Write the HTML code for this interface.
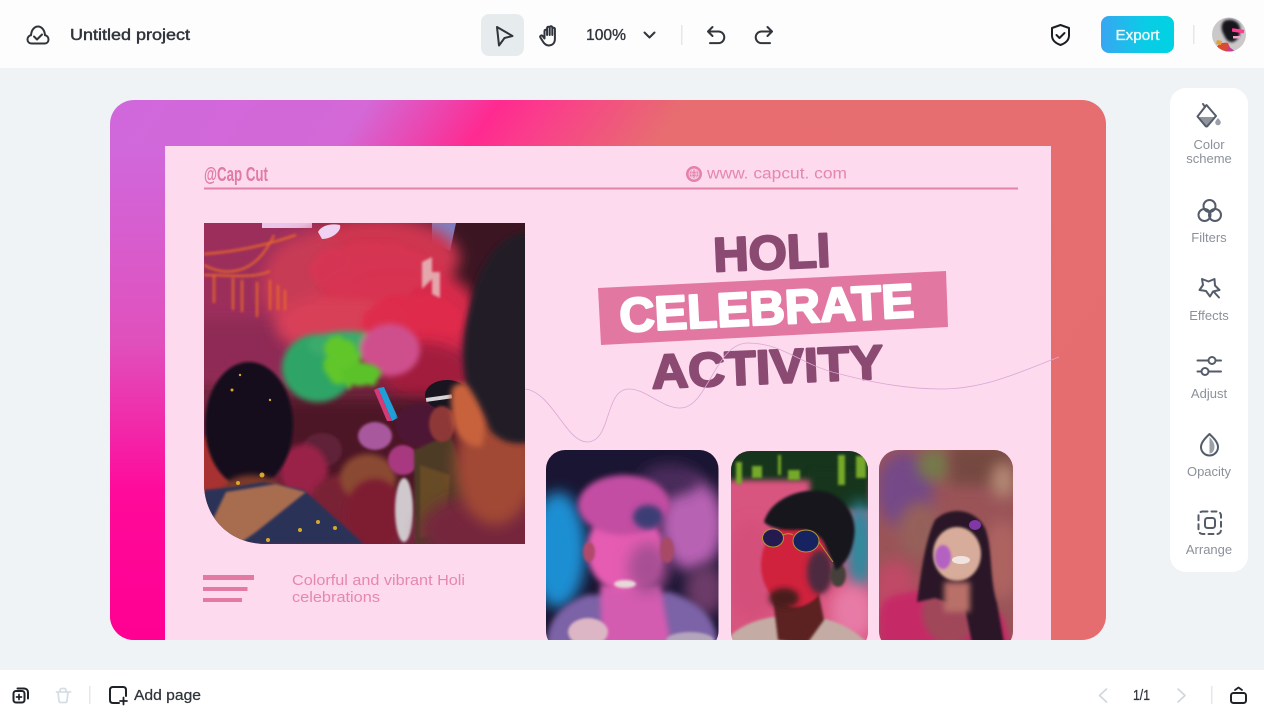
<!DOCTYPE html>
<html lang="en">
<head>
<meta charset="utf-8">
<title>Untitled project</title>
<style>
html,body{margin:0;padding:0;width:1264px;height:712px;overflow:hidden;background:#eff3f6}
svg{display:block}
text{font-family:"Liberation Sans",sans-serif}
.ui{stroke:#30353b;stroke-width:2;fill:none;stroke-linecap:round;stroke-linejoin:round}
.side{stroke:#555c69;stroke-width:2;fill:none;stroke-linecap:round;stroke-linejoin:round}
.lbl{font-size:13px;fill:#8b919a;text-anchor:middle}
</style>
</head>
<body>
<svg width="1264" height="712" viewBox="0 0 1264 712" xmlns="http://www.w3.org/2000/svg">
<defs>
<linearGradient id="bg" gradientUnits="userSpaceOnUse" x1="147" y1="47" x2="1069" y2="693">
<stop offset="0" stop-color="#d068dc"/><stop offset=".19" stop-color="#d368d6"/><stop offset=".285" stop-color="#ff2a90"/><stop offset=".32" stop-color="#fb3c8c"/><stop offset=".42" stop-color="#e76d70"/><stop offset="1" stop-color="#e56d6f"/>
</linearGradient>
<linearGradient id="bg2" x1="0" y1="0" x2="0" y2="1">
<stop offset="0" stop-color="#d068dc"/><stop offset=".4" stop-color="#e050bc"/><stop offset=".7" stop-color="#ff0a9a"/><stop offset="1" stop-color="#ff0092"/>
</linearGradient>
<linearGradient id="exp" x1="0" y1="0" x2="1" y2="0"><stop offset="0" stop-color="#38a6f2"/><stop offset=".6" stop-color="#0accE6"/><stop offset="1" stop-color="#00d2e2"/></linearGradient>
<filter id="b1" x="-30%" y="-30%" width="160%" height="160%"><feGaussianBlur stdDeviation="1.200"/></filter>
<filter id="b3" x="-40%" y="-40%" width="180%" height="180%"><feGaussianBlur stdDeviation="3"/></filter>
<filter id="b7" x="-50%" y="-50%" width="200%" height="200%"><feGaussianBlur stdDeviation="7"/></filter>
<filter id="cl" x="-30%" y="-30%" width="160%" height="160%"><feTurbulence type="fractalNoise" baseFrequency=".06" numOctaves="3" seed="4"/><feDisplacementMap in="SourceGraphic" scale="14"/><feGaussianBlur stdDeviation="2.500"/></filter>
<clipPath id="canvas"><rect x="110" y="100" width="996" height="540" rx="24"/></clipPath>
<clipPath id="p1"><path d="M204 223H525V544H266C230 544 204 518 204 483Z"/></clipPath>
<clipPath id="p2"><rect x="546" y="450" width="172.500" height="200" rx="19"/></clipPath>
<clipPath id="p3"><rect x="731" y="451" width="137" height="200" rx="19"/></clipPath>
<clipPath id="p4"><rect x="879" y="450" width="134" height="200" rx="19"/></clipPath>
<clipPath id="av"><circle cx="1229" cy="34.500" r="17"/></clipPath>
</defs>

<rect width="1264" height="712" fill="#eff3f6"/>
<rect width="1264" height="68" fill="#fdfdfe"/>
<rect y="670" width="1264" height="42" fill="#ffffff"/>

<!-- Canvas -->
<g clip-path="url(#canvas)">
<rect x="110" y="100" width="996" height="540" fill="url(#bg)"/>
<rect x="110" y="146" width="56" height="494" fill="url(#bg2)"/>
<rect x="165" y="146" width="886" height="500" fill="#fddaee"/>

<text x="204" y="181" font-size="20" font-weight="700" fill="#e07ba3" textLength="64" lengthAdjust="spacingAndGlyphs">@Cap Cut</text>
<circle cx="694" cy="174" r="8" fill="#e382aa"/>
<g fill="none" stroke="#fbd4e8" stroke-width=".8"><circle cx="694" cy="174" r="5"/><ellipse cx="694" cy="174" rx="2.200" ry="5"/><path d="M689 174h10M690 171h8M690 177h8"/></g>
<text x="707" y="178.500" font-size="15.500" fill="#e587ad" textLength="140" lengthAdjust="spacingAndGlyphs">www. capcut. com</text>
<rect x="204" y="187.500" width="814" height="2" fill="#e283a8"/>

<!-- Main photo -->
<g clip-path="url(#p1)">
<rect x="204" y="223" width="321" height="321" fill="#742640"/>
<rect x="190" y="210" width="130" height="170" fill="#9c2e5c" filter="url(#b7)"/>
<rect x="190" y="320" width="100" height="60" fill="#8e2c54" filter="url(#b7)"/>
<rect x="262" y="223" width="50" height="5" fill="#eac6e8"/>
<rect x="440" y="215" width="95" height="95" fill="#3a1620" filter="url(#b3)"/>
<path d="M432 223h24l-6 28-18-8z" fill="#7f80c0"/>
<g filter="url(#b7)">
<ellipse cx="375" cy="258" rx="85" ry="40" fill="#cf3450"/>
<ellipse cx="310" cy="285" rx="48" ry="50" fill="#c83a55"/>
<ellipse cx="395" cy="310" rx="82" ry="46" fill="#d82c4c"/>
<ellipse cx="345" cy="325" rx="70" ry="30" fill="#d84058"/>
<ellipse cx="435" cy="335" rx="32" ry="30" fill="#dc2a4c"/>
</g>
<g filter="url(#cl)" opacity=".85">
<ellipse cx="370" cy="270" rx="60" ry="28" fill="#d83452"/>
<ellipse cx="410" cy="320" rx="50" ry="26" fill="#e02c4c"/>
</g>
<path d="M318 232c3-6 12-9 22-7 2 6-8 14-18 14z" fill="#f0d2f2"/>
<path d="M422 262l10-5v22l-10 10zM432 272h8v26l-8-4z" fill="#e8d0cc" opacity=".75" filter="url(#b1)"/>
<g fill="none" stroke="#e8682a" stroke-width="2" filter="url(#b1)">
<path d="M204 254c30-2 60-8 92-19"/><path d="M204 265c18 10 50 14 70-30"/><path d="M204 275c25 0 50 4 66-4"/>
<path d="M214 275v28M233 278v32M242 280v32M257 282v35M270 280v30M278 285v25M285 290v20"/>
</g>
<ellipse cx="425" cy="372" rx="45" ry="30" fill="#a21e3c" filter="url(#b7)"/>
<rect x="280" y="398" width="185" height="100" fill="#4e1628" filter="url(#b7)"/>
<g filter="url(#b3)">
<ellipse cx="318" cy="368" rx="36" ry="34" fill="#2ea566"/>
<ellipse cx="348" cy="345" rx="40" ry="14" fill="#3aab6c"/>
<ellipse cx="390" cy="350" rx="30" ry="26" fill="#cf4f8d"/>
</g>
<g filter="url(#cl)">
<ellipse cx="342" cy="362" rx="17" ry="25" fill="#60c62c"/>
<ellipse cx="362" cy="374" rx="19" ry="12" fill="#5cc22c"/>
</g>
<path d="M378 388l6-1 14 31-6 3z" fill="#1f9ed8"/><path d="M378 388l-4 2 13 31 5 0z" fill="#d43a78"/>
<ellipse cx="375" cy="436" rx="17" ry="14" fill="#a8589c" filter="url(#b1)"/>
<ellipse cx="322" cy="450" rx="20" ry="17" fill="#5e2438" filter="url(#b1)"/>
<ellipse cx="304" cy="472" rx="24" ry="28" fill="#9a2048" filter="url(#b3)"/>
<ellipse cx="345" cy="500" rx="34" ry="26" fill="#7a2434" filter="url(#b3)"/>
<ellipse cx="368" cy="478" rx="28" ry="24" fill="#8a4a30" filter="url(#b3)"/>
<ellipse cx="375" cy="515" rx="30" ry="36" fill="#7e1c30" filter="url(#b3)"/>
<ellipse cx="404" cy="510" rx="9" ry="32" fill="#cfc8cc" filter="url(#b1)"/>
<ellipse cx="403" cy="460" rx="15" ry="15" fill="#a83880" filter="url(#b1)"/>
<ellipse cx="420" cy="425" rx="24" ry="22" fill="#4e1634" filter="url(#b1)"/>
<path d="M414 450l36-16 25 70-15 40h-45z" fill="#4e3a26" filter="url(#b1)"/>
<path d="M420 465l30 10-4 55-26 8z" fill="#6e5028" opacity=".8" filter="url(#b1)"/>
<ellipse cx="447" cy="395" rx="22" ry="15" fill="#181420"/>
<rect x="426" y="396" width="26" height="4" fill="#d8d4d8" transform="rotate(-8 440 398)"/>
<ellipse cx="442" cy="424" rx="13" ry="18" fill="#8e3838" filter="url(#b1)"/>
<ellipse cx="212" cy="470" rx="18" ry="36" fill="#a83030" filter="url(#b1)"/>
<ellipse cx="495" cy="530" rx="75" ry="38" fill="#74283c" filter="url(#b7)"/>
<ellipse cx="495" cy="465" rx="40" ry="60" fill="#a24836" filter="url(#b7)"/>
<path d="M452 388c8-8 22-8 28 6 6 16 6 36 2 52-10 2-22-4-28-20-3-12-4-28-2-38z" fill="#c8623e" filter="url(#b3)"/>
<path d="M530 232C505 232 484 256 474 290 465 320 460 350 466 382 474 396 484 410 490 430 500 442 515 446 530 442Z" fill="#241a28" filter="url(#b3)"/>
<ellipse cx="249" cy="425" rx="44" ry="63" fill="#14101a" filter="url(#b1)"/>
<ellipse cx="252" cy="495" rx="32" ry="20" fill="#7c3a2a" filter="url(#b3)"/>
<path d="M204 490l30-3 30-5 40 8 60 54H204z" fill="#2c3358" filter="url(#b1)"/>
<path d="M226 492l50-8 30 8-50 40-20 14-30-12z" fill="#a86c50" filter="url(#b1)"/>
<g fill="#d8a828"><circle cx="232" cy="390" r="1.500"/><circle cx="240" cy="375" r="1.200"/><circle cx="270" cy="400" r="1.200"/><circle cx="300" cy="530" r="2"/><circle cx="318" cy="522" r="2"/><circle cx="335" cy="528" r="2"/><circle cx="262" cy="475" r="2.500"/><circle cx="238" cy="483" r="2"/><circle cx="268" cy="540" r="2"/></g>
</g>

<!-- Small text -->
<rect x="203" y="575" width="51" height="5" fill="#e37aa4"/>
<rect x="203" y="587" width="44.500" height="4" fill="#e37aa4"/>
<rect x="203" y="598" width="39" height="4" fill="#e37aa4"/>
<text x="292" y="585" font-size="15" fill="#e588ae" textLength="173" lengthAdjust="spacingAndGlyphs">Colorful and vibrant Holi</text>
<text x="292" y="602" font-size="15" fill="#e588ae" textLength="88" lengthAdjust="spacingAndGlyphs">celebrations</text>

<!-- Title -->
<polygon points="598,288 946,271 948,327 601,345" fill="#e278a2"/>
<g font-weight="700" font-size="48" text-anchor="middle" stroke-linejoin="round">
<text transform="translate(772.500 269) rotate(-2.500)" fill="#8a4a72" stroke="#8a4a72" stroke-width="2.200" textLength="117" lengthAdjust="spacingAndGlyphs">HOLI</text>
<text transform="translate(767.500 324.500) rotate(-2.900)" fill="#ffffff" stroke="#ffffff" stroke-width="2.200" textLength="295" lengthAdjust="spacingAndGlyphs">CELEBRATE</text>
<text transform="translate(768 383.500) rotate(-2.500)" fill="#8a4a72" stroke="#8a4a72" stroke-width="2.200" textLength="232" lengthAdjust="spacingAndGlyphs">ACTIVITY</text>
</g>
<path d="M525 389C552 392 566 442 587 442C612 442 604 389 629 389C646 389 662 408 680 408C708 408 715 343 748 343C782 343 800 364 836 373C870 382 905 389 941 389C985 389 1020 372 1059 357" fill="none" stroke="#d9a8d4" stroke-width=".8"/>

<!-- Photo A -->
<g clip-path="url(#p2)">
<rect x="546" y="450" width="173" height="200" fill="#1a1532"/>
<ellipse cx="558" cy="550" rx="28" ry="58" fill="#1b8ed2" filter="url(#b7)"/>
<ellipse cx="692" cy="525" rx="32" ry="46" fill="#b862b4" filter="url(#b7)"/>
<ellipse cx="705" cy="590" rx="20" ry="26" fill="#6c3a68" filter="url(#b7)"/>
<ellipse cx="670" cy="480" rx="30" ry="16" fill="#4a2a5a" filter="url(#b7)"/>
<path d="M546 650c0-28 12-44 40-55l84-3c30 10 48 26 48 58z" fill="#7b62a6" filter="url(#b3)"/>
<path d="M600 585h60l12 65h-70z" fill="#d45cb0" filter="url(#b3)"/>
<ellipse cx="625" cy="550" rx="38" ry="42" fill="#e55cb2" filter="url(#b3)"/>
<ellipse cx="648" cy="568" rx="20" ry="26" fill="#a85094" filter="url(#b7)"/>
<ellipse cx="589" cy="552" rx="6" ry="10" fill="#b0486a" filter="url(#b1)"/>
<ellipse cx="667" cy="550" rx="7" ry="13" fill="#a84a68" filter="url(#b1)"/>
<ellipse cx="624" cy="505" rx="46" ry="30" fill="#c24ea2" filter="url(#b3)"/>
<ellipse cx="648" cy="517" rx="15" ry="12" fill="#3e3c74" filter="url(#b3)"/>
<ellipse cx="625" cy="584" rx="11" ry="4" fill="#e8d8d8" filter="url(#b1)"/>
<ellipse cx="588" cy="632" rx="20" ry="14" fill="#dcb6c4" filter="url(#b1)"/>
<ellipse cx="690" cy="640" rx="24" ry="8" fill="#b4a4bc" filter="url(#b1)"/>
</g>

<!-- Photo B -->
<g clip-path="url(#p3)">
<rect x="731" y="451" width="137" height="200" fill="#d8557f"/>
<rect x="720" y="440" width="160" height="40" fill="#14351e" filter="url(#b3)"/>
<rect x="810" y="470" width="60" height="40" fill="#14351e" filter="url(#b3)"/>
<g fill="#76a82c" filter="url(#b1)"><rect x="736" y="462" width="6" height="22"/><rect x="752" y="466" width="10" height="12"/><rect x="788" y="470" width="12" height="10"/><rect x="838" y="455" width="7" height="30"/><rect x="856" y="456" width="10" height="22"/><rect x="778" y="455" width="3" height="20"/></g>
<ellipse cx="860" cy="545" rx="14" ry="45" fill="#2f8a9e" filter="url(#b7)"/>
<ellipse cx="852" cy="612" rx="22" ry="28" fill="#e77aa6" filter="url(#b7)"/>
<ellipse cx="752" cy="570" rx="24" ry="50" fill="#d4507a" filter="url(#b7)"/>
<path d="M731 650v-15c14-12 30-16 42-18l52 2c18 4 32 14 43 24v7z" fill="#c4aca4" filter="url(#b1)"/>
<path d="M772 590h46l6 30-18 25-28-5z" fill="#5c2020" filter="url(#b1)"/>
<ellipse cx="795" cy="565" rx="34" ry="42" fill="#d0203e" filter="url(#b1)"/>
<ellipse cx="820" cy="572" rx="13" ry="22" fill="#4e2a40" filter="url(#b3)"/>
<ellipse cx="784" cy="598" rx="15" ry="10" fill="#4a1a1e" filter="url(#b3)"/>
<ellipse cx="838" cy="575" rx="8" ry="12" fill="#45403a" filter="url(#b1)"/>
<path d="M764 522c6-22 36-36 62-30 16 4 32 22 28 46-2 14-8 26-18 32l-10-22c-4-14-18-20-32-18-14 0-24-2-30-8z" fill="#12181c" filter="url(#b1)"/>
<ellipse cx="773" cy="538" rx="10.500" ry="9" fill="#241a50" stroke="#b09838" stroke-width="1"/>
<ellipse cx="806" cy="541" rx="13" ry="11" fill="#172260" stroke="#b09838" stroke-width="1"/>
<path d="M783 535c4-2 7-2 10 0M819 542l14 20" fill="none" stroke="#b09838" stroke-width="1"/>
</g>

<!-- Photo C -->
<g clip-path="url(#p4)">
<rect x="879" y="450" width="134" height="200" fill="#9a5458"/>
<ellipse cx="905" cy="490" rx="28" ry="38" fill="#744a88" filter="url(#b7)"/>
<ellipse cx="935" cy="465" rx="18" ry="16" fill="#747a4c" filter="url(#b7)"/>
<rect x="950" y="445" width="63" height="40" fill="#74483f" filter="url(#b7)"/>
<ellipse cx="1003" cy="480" rx="12" ry="18" fill="#b48874" filter="url(#b7)"/>
<ellipse cx="920" cy="530" rx="22" ry="28" fill="#96605a" filter="url(#b7)"/>
<ellipse cx="1002" cy="560" rx="18" ry="40" fill="#ad6460" filter="url(#b7)"/>
<ellipse cx="895" cy="590" rx="22" ry="30" fill="#bf4866" filter="url(#b7)"/>
<path d="M879 650v-35c2-16 12-20 26-22l30-5 34 8 34 20 10 34z" fill="#c62a66" filter="url(#b3)"/>
<ellipse cx="950" cy="612" rx="28" ry="32" fill="#a0465a" filter="url(#b3)"/>
<path d="M915 640h75v10h-75z" fill="#8a1f50"/>
<path d="M935 520c14-14 40-12 50 8 8 20 4 50 12 75l8 45h-32l-8-40-30-10-18 4c4-28 8-62 18-82z" fill="#2a1428" filter="url(#b1)"/>
<ellipse cx="957" cy="554" rx="24" ry="27" fill="#d8ac9a" filter="url(#b1)"/>
<ellipse cx="943" cy="557" rx="8" ry="12" fill="#b462c2" filter="url(#b1)"/>
<ellipse cx="975" cy="525" rx="6" ry="5" fill="#8038a8"/>
<ellipse cx="961" cy="560" rx="9" ry="4" fill="#f0e4e0"/>
<rect x="944" y="582" width="26" height="30" fill="#b87068" filter="url(#b3)"/>
</g>
</g>

<!-- Top bar -->
<path class="ui" d="M32 43.500h12.500c2.500 0 4-1.800 4-4s-1.500-4-3.500-4.200c-.3-5-3.200-8.800-7-8.800s-6.700 3.800-7 8.800c-2 .2-3.500 2-3.500 4.200s1.500 4 4.500 4z"/>
<path class="ui" d="M34 36.500l3 3 5-5" stroke-width="1.700"/>
<text x="70" y="40" font-size="15.500" fill="#30353b" stroke="#30353b" stroke-width=".45" textLength="120" lengthAdjust="spacingAndGlyphs">Untitled project</text>

<rect x="481" y="14" width="43" height="42" rx="8" fill="#e6ebee"/>
<path class="ui" d="M497 27L512.500 36 504.500 38 499 45.500Z"/>
<path class="ui" d="M544.500 38.500V31a1.300 1.300 0 0 1 2.600 0v4V28a1.300 1.300 0 0 1 2.600 0v7-7.500a1.300 1.300 0 0 1 2.600 0V35v-6a1.300 1.300 0 0 1 2.600 0v10c0 4-2.500 6.500-6 6.500-3 0-4.500-1.500-6-4l-2.500-4c-.8-1.500 1.200-2.700 2.300-1.500z" stroke-width="1.800"/>
<text x="586" y="40" font-size="15.500" fill="#30353b" stroke="#30353b" stroke-width=".35" textLength="40" lengthAdjust="spacingAndGlyphs">100%</text>
<path class="ui" d="M644.500 32.500l5 5 5-5"/>
<rect x="681" y="25" width="1.500" height="20" fill="#e3e7ea"/>
<path class="ui" d="M712.500 27l-4.500 4.500 4.500 4.500M708 31.500h10.500a5.800 5.800 0 0 1 0 11.600H710"/>
<path class="ui" d="M767.500 27l4.500 4.500-4.500 4.500M772 31.500h-10.500a5.800 5.800 0 0 0 0 11.600H770"/>

<path d="M1060.500 25l8.500 3v7.500c0 4.800-3.800 7.800-8.500 9.500-4.700-1.700-8.500-4.700-8.500-9.500V28z" fill="none" stroke="#1c2024" stroke-width="2" stroke-linejoin="round"/>
<path d="M1056.500 35l3 3 5-5" fill="none" stroke="#1c2024" stroke-width="2" stroke-linecap="round" stroke-linejoin="round"/>
<rect x="1101" y="16" width="73" height="37" rx="8" fill="url(#exp)"/>
<text x="1137.500" y="40" font-size="15" fill="#eafcff" stroke="#eafcff" stroke-width=".35" text-anchor="middle" textLength="44" lengthAdjust="spacingAndGlyphs">Export</text>
<rect x="1193" y="25" width="1.500" height="19" fill="#e3e7ea"/>
<g clip-path="url(#av)">
<rect x="1212" y="17" width="34" height="35" fill="#cbc8ca"/>
<path d="M1224 21c6-3 14-1 16 6 1 6-1 13-7 15-6 1-8-5-10-9-2-4-2-9 1-12z" fill="#17141a" filter="url(#b1)"/>
<path d="M1216 48c3-5 8-6 12-5l4 9h-16z" fill="#d84a34"/>
<path d="M1228 46l8 6h-10z" fill="#c83c90"/>
<rect x="1232" y="29" width="12" height="3.500" fill="#ff3c90" transform="rotate(8 1238 31)"/>
<rect x="1233" y="36" width="7" height="2.500" fill="#f4a0c8"/>
<path d="M1217 40l5 1-1 4-5-1z" fill="#e8a030"/>
</g>

<!-- Side panel -->
<rect x="1170" y="88" width="78" height="484" rx="16" fill="#ffffff"/>
<path d="M1199 117h16l-7 8.500q-1 1-2 0z" fill="#8f949d"/>
<path class="side" d="M1206.500 105l9.500 11-8.500 10q-1 1-2 0l-8-9.500z"/>
<path class="side" d="M1205 107l-2-3"/>
<path d="M1218 118c1.800 2 2.800 3.300 2.800 4.500a2.800 2.800 0 0 1-5.600 0c0-1.200 1-2.500 2.800-4.500z" fill="#9ba0a8"/>
<text class="lbl" x="1209" y="149">Color</text>
<text class="lbl" x="1209" y="163">scheme</text>

<circle class="side" cx="1209.500" cy="206" r="6"/><circle class="side" cx="1204.500" cy="215" r="6"/><circle class="side" cx="1215" cy="215" r="6"/>
<text class="lbl" x="1209" y="242">Filters</text>

<path class="side" d="M1202 279l6.500 2.500 6-2.500 .5 6.500 4.500 4.500-6.500 1.500-3 5-4-5.500-6.500-1 3.500-5z" stroke-width="1.900"/>
<path class="side" d="M1214 292l5 5.500" stroke-width="1.900"/>
<text class="lbl" x="1209" y="320">Effects</text>

<path class="side" d="M1197.500 360.500h11M1216 360.500h5M1197.500 371.500h4M1209 371.500h12"/>
<circle class="side" cx="1212" cy="360.500" r="3.500"/><circle class="side" cx="1205" cy="371.500" r="3.500"/>
<text class="lbl" x="1209" y="398">Adjust</text>

<path d="M1209.500 437c2 2.200 5 5.500 5 9.500 0 4-2 7-5 7z" fill="#9aa0a8"/>
<path class="side" d="M1209.500 434c3.500 3.500 8.500 8 8.500 13a8.500 8.500 0 0 1-17 0c0-5 5-9.500 8.500-13z"/>
<text class="lbl" x="1209" y="476">Opacity</text>

<rect class="side" x="1198.500" y="511.500" width="22.500" height="22.500" rx="4" stroke-dasharray="5 4"/>
<rect class="side" x="1205" y="518" width="10" height="10" rx="2.500" stroke-width="2.200"/>
<text class="lbl" x="1209" y="554">Arrange</text>

<!-- Bottom bar -->
<g class="ui">
<rect x="13.500" y="691" width="11" height="11.500" rx="2.500" stroke="#1f2327"/>
<path d="M17.500 688.500h6.500c2.500 0 4 1.500 4 4v6" stroke="#1f2327"/>
<path d="M19 694.500v5M16.500 697h5" stroke="#1f2327" stroke-width="1.700"/>
</g>
<path d="M56.500 692h14M60 692v-1.500q0-2 2-2h2q2 0 2 2V692M58 692l1 9q.2 1.500 2 1.500h4q1.800 0 2-1.500l1-9" fill="none" stroke="#d6dee5" stroke-width="1.800" stroke-linecap="round" stroke-linejoin="round"/>
<rect x="89" y="686" width="1.500" height="18" fill="#e3e7ea"/>
<path d="M119 703h-6q-3 0-3-3v-10q0-3 3-3h10q3 0 3 3v6" fill="none" stroke="#1f2327" stroke-width="2" stroke-linecap="round"/>
<path d="M123.500 697.500v7M120 701h7" fill="none" stroke="#1f2327" stroke-width="1.800" stroke-linecap="round"/>
<text x="134" y="700" font-size="14.500" fill="#30353b" stroke="#30353b" stroke-width=".25" textLength="67" lengthAdjust="spacingAndGlyphs">Add page</text>
<path d="M1106.500 689l-7 6.500 7 6.500" fill="none" stroke="#d0d6db" stroke-width="1.600" stroke-linecap="round" stroke-linejoin="round"/>
<text x="1133" y="700" font-size="14.500" fill="#30353b" stroke="#30353b" stroke-width=".25" textLength="17" lengthAdjust="spacingAndGlyphs">1/1</text>
<path d="M1178 689l7 6.500-7 6.500" fill="none" stroke="#d0d6db" stroke-width="1.600" stroke-linecap="round" stroke-linejoin="round"/>
<rect x="1211" y="686" width="1.500" height="18" fill="#e3e7ea"/>
<rect x="1231" y="693" width="15" height="10" rx="2.500" fill="none" stroke="#1f2327" stroke-width="2"/>
<path d="M1235 690l3.500-2.500 3.500 2.500" fill="none" stroke="#1f2327" stroke-width="1.800" stroke-linecap="round" stroke-linejoin="round"/>
</svg>
</body>
</html>
